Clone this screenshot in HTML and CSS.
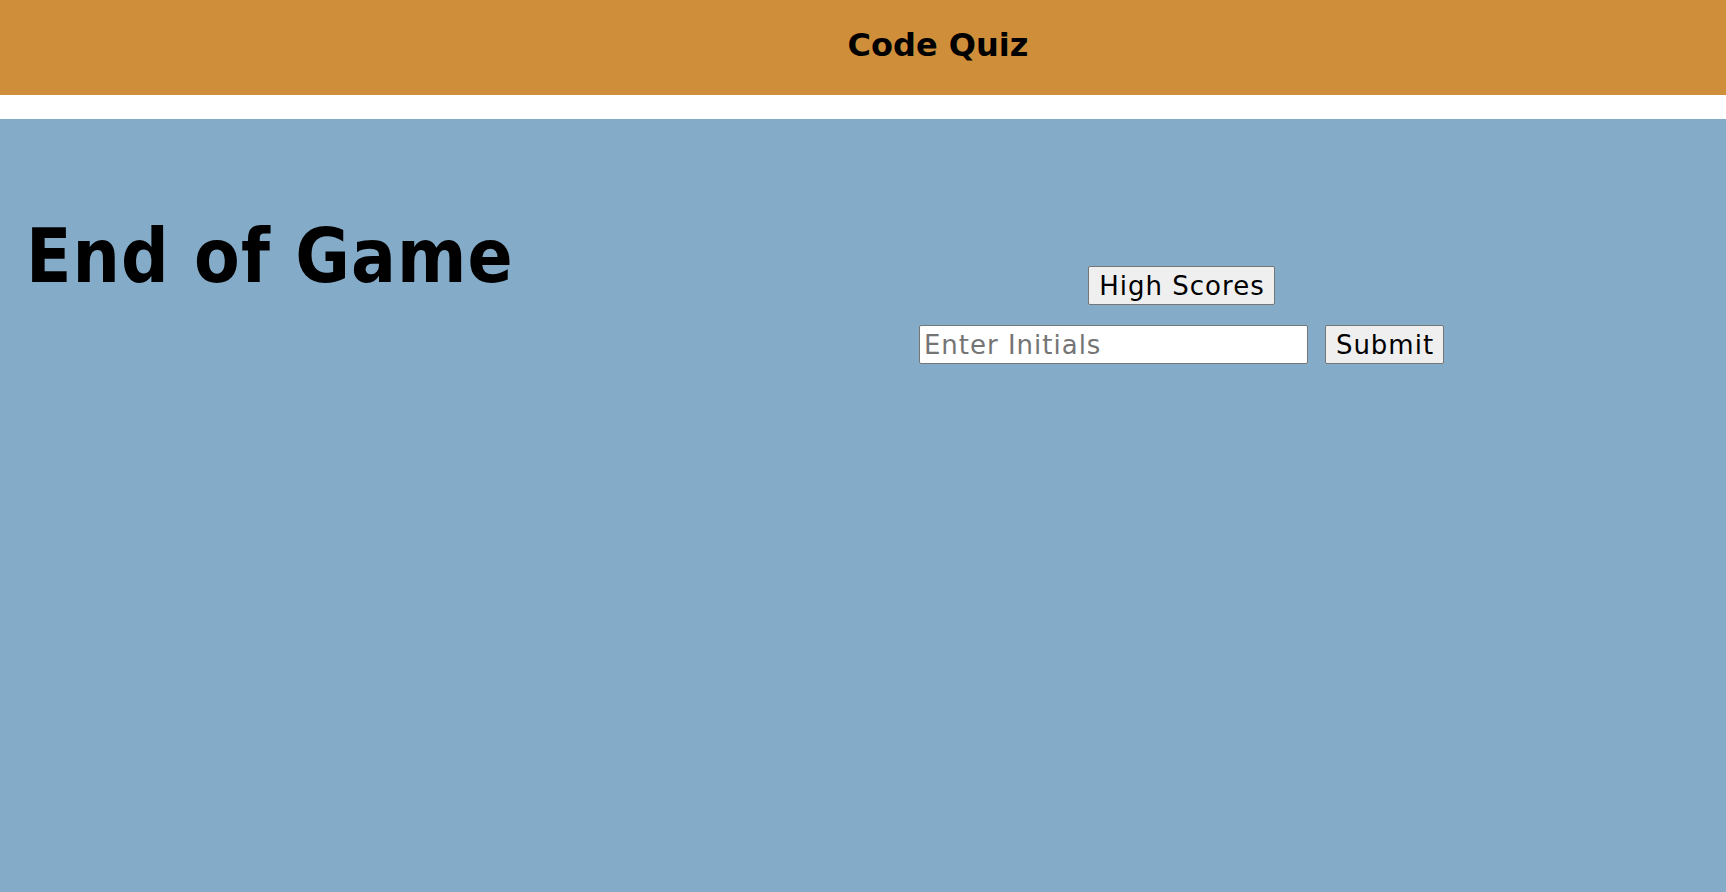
FILE: index.html
```html
<!DOCTYPE html>
<html lang="en">
<head>
<meta charset="utf-8">
<title>Code Quiz</title>
<link rel="stylesheet" href="styles.css">
</head>
<body>
<header class="site-header">
  <h2 class="site-title">Code Quiz</h2>
</header>
<main class="stage">
  <section class="stage-left">
    <h1 class="end-title">End of Game</h1>
  </section>
  <section class="stage-right">
    <button class="btn" type="button">High Scores</button>
    <form class="score-form">
      <input class="initials" type="text" placeholder="Enter Initials">
      <button class="btn" type="submit">Submit</button>
    </form>
  </section>
</main>
</body>
</html>
```

FILE: styles.css
```css
html, body {
  margin: 0;
  padding: 0;
  height: 100%;
}
body {
  font-family: "DejaVu Sans", Verdana, sans-serif;
  display: flex;
  flex-direction: column;
  background: #ffffff;
}
.site-header {
  background: #cf8f3a;
  height: 95px;
  box-sizing: border-box;
  padding: 27px 0 0 150px;
  text-align: center;
}
.site-title {
  margin: 0;
  font-size: 32px;
  font-weight: bold;
  line-height: 37px;
  color: #000;
}
.stage {
  margin-top: 24px;
  flex: 1;
  background: #84abc7;
  display: flex;
  padding-top: 95px;
}
.stage-left {
  width: 637px;
  padding-left: 26px;
  box-sizing: border-box;
}
.end-title {
  margin: 0;
  font-family: "DejaVu Sans Condensed", "DejaVu Sans", sans-serif;
  font-stretch: condensed;
  font-size: 74px;
  font-weight: bold;
  letter-spacing: 1.1px;
  line-height: 84px;
  color: #000;
}
.stage-right {
  flex: 1;
  display: flex;
  flex-direction: column;
  align-items: center;
  gap: 20px;
  padding-top: 52px;
}
.score-form {
  display: flex;
  gap: 17px;
  margin: 0;
}
.btn {
  font-family: "DejaVu Sans", Verdana, sans-serif;
  font-size: 26px;
  letter-spacing: 1px;
  height: 39px;
  padding: 0 9px 0 10px;
  background: #efefef;
  border: 1px solid #767676;
  border-radius: 2px;
  color: #000;
}
.initials {
  font-family: "DejaVu Sans", Verdana, sans-serif;
  font-size: 26px;
  letter-spacing: 1px;
  width: 389px;
  height: 39px;
  box-sizing: border-box;
  padding: 0 4px;
  border: 1px solid #767676;
  border-radius: 2px;
  background: #fff;
}
.initials::placeholder {
  color: #757575;
}
```
